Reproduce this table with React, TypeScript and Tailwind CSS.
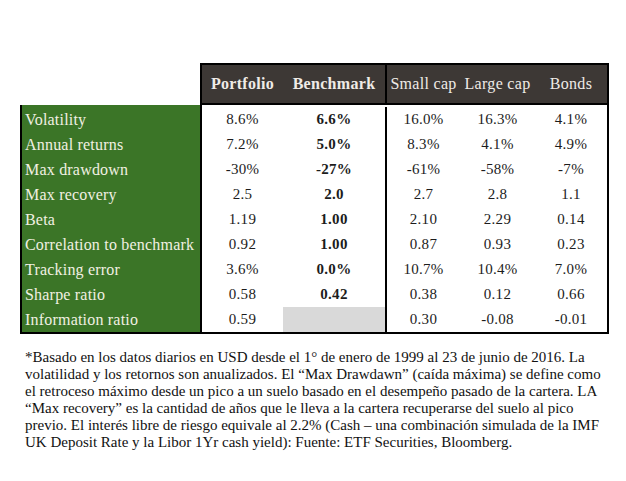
const font = { fontFamily: '"Liberation Serif", Georgia, serif' };

type Row = {
  label: string;
  values: string[];
};

const rows: Row[] = [
  { label: "Volatility", values: ["8.6%", "6.6%", "16.0%", "16.3%", "4.1%"] },
  { label: "Annual returns", values: ["7.2%", "5.0%", "8.3%", "4.1%", "4.9%"] },
  { label: "Max drawdown", values: ["-30%", "-27%", "-61%", "-58%", "-7%"] },
  { label: "Max recovery", values: ["2.5", "2.0", "2.7", "2.8", "1.1"] },
  { label: "Beta", values: ["1.19", "1.00", "2.10", "2.29", "0.14"] },
  { label: "Correlation to benchmark", values: ["0.92", "1.00", "0.87", "0.93", "0.23"] },
  { label: "Tracking error", values: ["3.6%", "0.0%", "10.7%", "10.4%", "7.0%"] },
  { label: "Sharpe ratio", values: ["0.58", "0.42", "0.38", "0.12", "0.66"] },
  { label: "Information ratio", values: ["0.59", "", "0.30", "-0.08", "-0.01"] },
];

function ValueCell({ value, bold, grey, width }: { value: string; bold?: boolean; grey?: boolean; width: string }) {
  return (
    <div
      className={`${width} h-[25px] flex items-center justify-center text-[15px] tracking-[0.3px] text-[#1c1c1c] ${
        bold ? "font-bold" : ""
      } ${grey ? "bg-[#d9d9d9]" : ""}`}
    >
      {value}
    </div>
  );
}

export default function App() {
  return (
    <div className="w-[626px] h-[481px] bg-white" style={font}>
      <div className="pt-[63px] pl-[20px]">
        {/* header */}
        <div className="ml-[180px] w-[409px] h-[42px] flex bg-[#3d3835] border-2 border-black text-[#efebe7] text-[16px] tracking-[0.3px]">
          <div className="w-[81px] flex items-center justify-center font-bold">Portfolio</div>
          <div className="w-[104px] flex items-center justify-center font-bold border-r-2 border-black">Benchmark</div>
          <div className="w-[73px] flex items-center justify-center">Small cap</div>
          <div className="w-[75px] flex items-center justify-center">Large cap</div>
          <div className="w-[72px] flex items-center justify-center">Bonds</div>
        </div>

        {/* body */}
        <div className="flex">
          <div className="w-[182px] bg-[#3b7527] border-2 border-black border-t-0 pt-[2px]">
            {rows.map((r) => (
              <div key={r.label} className="h-[25px] flex items-center pl-[3px] text-[16px] tracking-[0.2px] text-[#f1f0e2] whitespace-nowrap">
                {r.label}
              </div>
            ))}
          </div>
          <div className="flex border-b-2 border-r-2 border-black pt-[2px]">
            <div className="flex flex-col border-r-2 border-black">
              {rows.map((r, i) => (
                <div key={r.label} className="flex">
                  <ValueCell value={r.values[0]} width="w-[81px]" />
                  <ValueCell value={r.values[1]} width="w-[102px]" bold grey={i === rows.length - 1} />
                </div>
              ))}
            </div>
            <div className="flex flex-col">
              {rows.map((r) => (
                <div key={r.label} className="flex">
                  <ValueCell value={r.values[2]} width="w-[73px]" />
                  <ValueCell value={r.values[3]} width="w-[75px]" />
                  <ValueCell value={r.values[4]} width="w-[72px]" />
                </div>
              ))}
            </div>
          </div>
        </div>

        {/* footnote */}
        <p className="mt-[15px] pl-[5px] text-[15px] leading-[17px] text-[#111] whitespace-nowrap">
          *Basado en los datos diarios en USD desde el 1° de enero de 1999 al 23 de junio de 2016. La
          <br />
          volatilidad y los retornos son anualizados. El “Max Drawdawn” (caída máxima) se define como
          <br />
          el retroceso máximo desde un pico a un suelo basado en el desempeño pasado de la cartera. LA
          <br />
          “Max recovery” es la cantidad de años que le lleva a la cartera recuperarse del suelo al pico
          <br />
          previo. El interés libre de riesgo equivale al 2.2% (Cash – una combinación simulada de la IMF
          <br />
          UK Deposit Rate y la Libor 1Yr cash yield): Fuente: ETF Securities, Bloomberg.
        </p>
      </div>
    </div>
  );
}
